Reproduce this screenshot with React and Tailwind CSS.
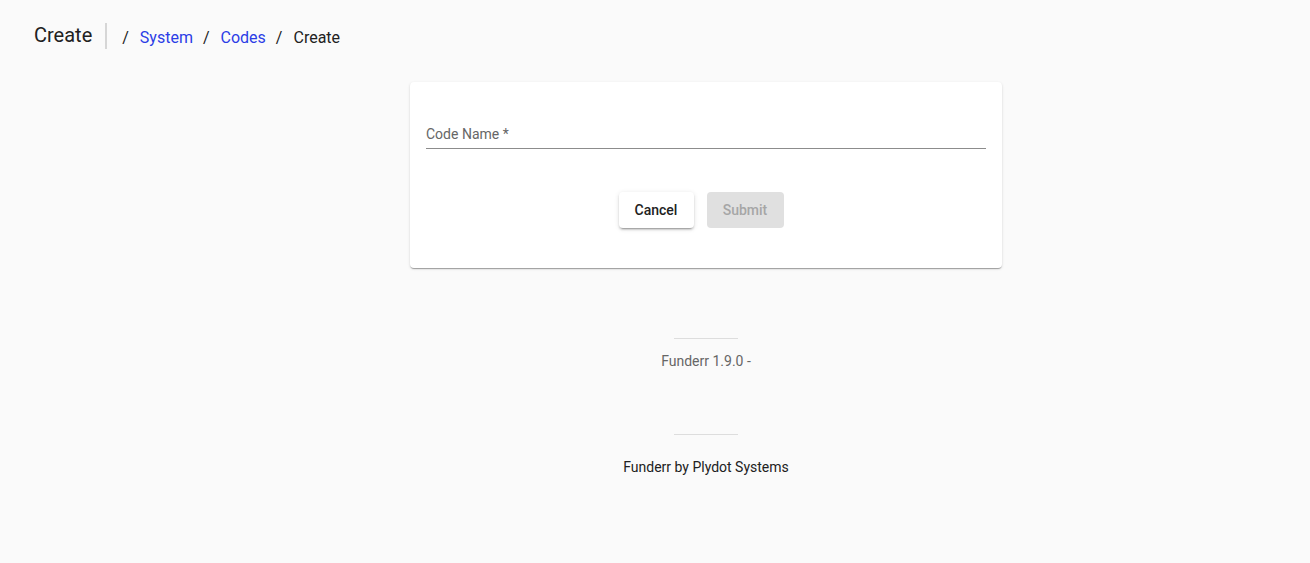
import React from 'react';

export default function App() {
  return (
    <div
      className="min-h-[563px] bg-[#fafafa] text-[#212121]"
      style={{ fontFamily: 'Roboto, "Liberation Sans", sans-serif' }}
    >
      {/* header */}
      <div className="flex h-[49px] items-center pl-[34px] pt-[22px]">
        <h1 className="mb-[2px] text-[20px] leading-[24px] text-[#212121]">Create</h1>
        <div className="ml-[13px] h-[26px] w-[2px] bg-[#d6d6d6]" />
        <nav className="ml-[15px] mt-[4px] flex items-center text-[16px] leading-[24px]">
          <span className="text-[#212121]">/</span>
          <a href="#" className="ml-[11px] text-[#2b3de6]">System</a>
          <span className="ml-[10px] mr-[11px] text-[#212121]">/</span>
          <a href="#" className="text-[#2b3de6]">Codes</a>
          <span className="ml-[10px] mr-[11px] text-[#212121]">/</span>
          <span className="text-[#212121]">Create</span>
        </nav>
      </div>

      <div className="ml-[410px] w-[592px] pt-[33px]">
        {/* form card */}
        <div className="rounded-[4px] bg-white px-4 pt-[42px] pb-[40px] shadow-[0_2px_1px_-1px_rgba(0,0,0,0.2),0_1px_1px_0_rgba(0,0,0,0.14),0_1px_3px_0_rgba(0,0,0,0.12)]">
          <div className="border-b border-[#8c8c8c] pb-[4px]">
            <label className="block text-[14px] leading-[20px] text-[#666666]">Code Name *</label>
          </div>
          <div className="mt-[43px] flex justify-center gap-[13px] pr-[10px]">
            <button className="h-[36px] w-[75px] rounded-[4px] bg-white text-[14px] font-medium text-[#212121] shadow-[0_3px_1px_-2px_rgba(0,0,0,0.2),0_2px_2px_0_rgba(0,0,0,0.14),0_1px_5px_0_rgba(0,0,0,0.12)]">
              Cancel
            </button>
            <button
              disabled
              className="h-[36px] w-[77px] rounded-[4px] bg-[#e0e0e0] text-[14px] font-medium text-[#a6a6a6]"
            >
              Submit
            </button>
          </div>
        </div>

        {/* footer */}
        <div className="flex flex-col items-center pt-[70px]">
          <div className="h-px w-[64px] bg-[#dddddd]" />
          <p className="mt-[12px] text-[14px] leading-[20px] text-[#666666]">Funderr 1.9.0 -</p>
          <div className="mt-[63px] h-px w-[64px] bg-[#dddddd]" />
          <p className="mt-[22px] text-[14px] leading-[20px] text-[#212121]">Funderr by Plydot Systems</p>
        </div>
      </div>
    </div>
  );
}
